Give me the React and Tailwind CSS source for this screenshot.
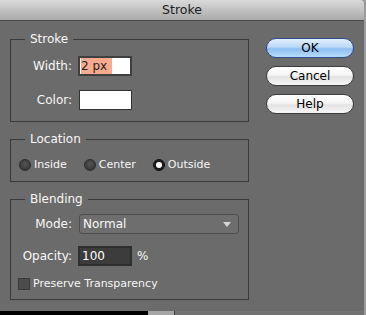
import React from "react";

const font = { fontFamily: '"DejaVu Sans", "Liberation Sans", sans-serif' };

function AquaButton({ children, primary }) {
  return (
    <button
      type="button"
      className={`h-[20px] w-[88px] rounded-full border text-[12px] leading-[18px] text-black ${
        primary
          ? "border-[#2f4c8f] bg-[linear-gradient(to_bottom,#e3f0fd_0%,#b9d8f8_45%,#8ebff1_55%,#b7dcfc_100%)]"
          : "border-[#3c3c3c] bg-[linear-gradient(to_bottom,#ffffff_0%,#f4f4f4_45%,#e2e2e2_55%,#f7f7f7_100%)]"
      }`}
    >
      {children}
    </button>
  );
}

function Radio({ label, checked }) {
  return (
    <label className="flex items-center gap-[3px]">
      <span
        className={`flex h-[12px] w-[12px] items-center justify-center rounded-full border ${
          checked ? "border-[#151515] bg-[#1c1c1c]" : "border-[#2c2c2c] bg-[radial-gradient(circle_at_50%_40%,#555_0%,#3a3a3a_70%)]"
        }`}
      >
        {checked && <span className="h-[6px] w-[6px] rounded-full bg-white" />}
      </span>
      <span className="text-[11px] leading-[14px] text-[#f6f6f6]">{label}</span>
    </label>
  );
}

function Group({ title, className = "", children }) {
  return (
    <fieldset className={`w-[239px] border border-[#3a3a3a] ${className}`}>
      <legend className="ml-[14px] px-[5px] text-[12px] leading-[15px] text-[#f8f8f8]">{title}</legend>
      {children}
    </fieldset>
  );
}

function Row({ label, children, className = "" }) {
  return (
    <div className={`flex items-center ${className}`}>
      <span className="w-[62px] pr-[1px] text-right text-[12px] text-[#f8f8f8]">{label}</span>
      {children}
    </div>
  );
}

export default function App() {
  return (
    <div className="flex h-[315px] w-[366px] overflow-hidden bg-[#9a9a9a]" style={font}>
      <div className="flex w-[364px] flex-col">
        <div className="flex h-[311px] flex-col overflow-hidden rounded-tr-[4px]">
          <div className="h-[21px] border-b border-[#4c4c4c] bg-[linear-gradient(to_bottom,#dadada,#a9a9a9)] text-center text-[12.5px] leading-[20px] text-[#1c1c1c]">
            Stroke
          </div>
          <div className="flex flex-1 bg-[#6b6b6b]">
            <div className="pl-[10px] pt-[11px]">
              <Group title="Stroke" className="pt-[9px] pb-[11px]">
                <Row label="Width:" className="h-[20px]">
                  <div className="ml-[5px] flex h-[20px] w-[54px] items-center border-2 border-[#3f3f3f] bg-white pl-[1px]">
                    <span className="bg-[#f8ab8c] pr-[5px] text-[12px] leading-[16px] text-[#222]">2 px</span>
                  </div>
                </Row>
                <Row label="Color:" className="mt-[14px] h-[20px]">
                  <div className="ml-[6px] h-[20px] w-[53px] border border-[#333] bg-white" />
                </Row>
              </Group>

              <Group title="Location" className="mt-[10px] pt-[11px] pb-[9px]">
                <div className="flex h-[14px] items-center gap-[17px] pl-[8px]">
                  <Radio label="Inside" />
                  <Radio label="Center" />
                  <Radio label="Outside" checked />
                </div>
              </Group>

              <Group title="Blending" className="mt-[10px] pt-[7px] pb-[9px]">
                <Row label="Mode:" className="h-[20px]">
                  <div className="ml-[6px] flex h-[20px] w-[160px] items-center justify-between rounded-[3px] border border-[#4e4e4e] bg-[#6e6e6e] pl-[3px] pr-[7px]">
                    <span className="text-[12px] text-[#f8f8f8]">Normal</span>
                    <svg width="8" height="5" viewBox="0 0 8 5">
                      <path d="M0 0 H8 L4 5 Z" fill="#d6d6d6" />
                    </svg>
                  </div>
                </Row>
                <Row label="Opacity:" className="mt-[12px] h-[20px]">
                  <div className="ml-[5px] flex h-[20px] w-[54px] items-center border-2 border-[#2e2e2e] bg-[#3c3c3c] pl-[2px]">
                    <span className="text-[12px] leading-[16px] text-white">100</span>
                  </div>
                  <span className="ml-[5px] text-[12px] text-[#f8f8f8]">%</span>
                </Row>
                <label className="mt-[12px] flex h-[12px] items-center gap-[3px] pl-[7px]">
                  <span className="h-[12px] w-[12px] border border-[#3a3a3a] bg-[#4c4c4c]" />
                  <span className="text-[11px] leading-[12px] text-[#f6f6f6]">Preserve Transparency</span>
                </label>
              </Group>
            </div>

            <div className="ml-[17px] mt-[17px] flex flex-col gap-[8px]">
              <AquaButton primary>OK</AquaButton>
              <AquaButton>Cancel</AquaButton>
              <AquaButton>Help</AquaButton>
            </div>
          </div>
        </div>
        <div className="flex h-[4px]">
          <div className="w-[148px] bg-black" />
          <div className="w-[26px] bg-[#a6a6a6]" />
          <div className="flex-1 border-l border-[#3c3c3c] bg-[#727272]" />
        </div>
      </div>
      <div className="w-[2px]" />
    </div>
  );
}
